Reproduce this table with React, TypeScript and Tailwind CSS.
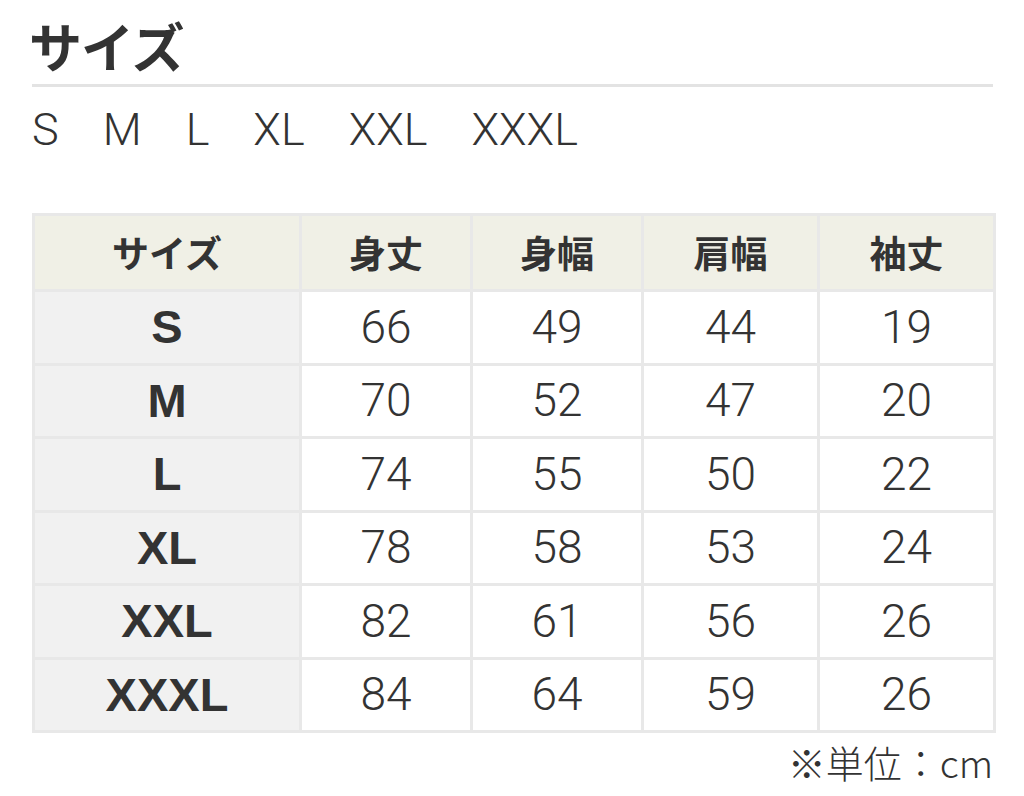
const sizes = ["S", "M", "L", "XL", "XXL", "XXXL"]

const rows = [
  ["S", 66, 49, 44, 19],
  ["M", 70, 52, 47, 20],
  ["L", 74, 55, 50, 22],
  ["XL", 78, 58, 53, 24],
  ["XXL", 82, 61, 56, 26],
  ["XXXL", 84, 64, 59, 26],
]

const heads = ["サイズ", "身丈", "身幅", "肩幅", "袖丈"]

export default function App() {
  return (
    <div className="min-h-screen bg-white text-[#333] px-[32px] pt-[12px] font-['Liberation_Sans','Noto_Sans_CJK_JP',sans-serif]">
      {/* Title */}
      <h1 className="text-[53px] leading-[66px] font-bold font-['Noto_Sans_CJK_JP',sans-serif] tracking-[-1px] -ml-[3px]">
        サイズ
      </h1>
      <div className="h-[3px] w-[961px] bg-[#e3e3e3] mt-[6px]" />

      {/* Size list */}
      <div className="flex gap-[44px] mt-[18px] text-[45px] leading-[50px] font-['Roboto',sans-serif] font-light">
        {sizes.map((s) => (
          <span key={s}>{s}</span>
        ))}
      </div>

      {/* Table */}
      <table className="mt-[58px] w-[961px] table-fixed border-collapse">
        <colgroup>
          <col className="w-[267px]" />
          <col className="w-[171px]" />
          <col className="w-[171px]" />
          <col className="w-[176px]" />
          <col className="w-[176px]" />
        </colgroup>
        <thead>
          <tr className="h-[76px] bg-[#f0f0e6]">
            {heads.map((h) => (
              <th
                key={h}
                className="border-[3px] border-[#e8e8e8] text-[37px] font-bold font-['Noto_Sans_CJK_JP',sans-serif]"
              >
                {h}
              </th>
            ))}
          </tr>
        </thead>
        <tbody>
          {rows.map((r) => (
            <tr key={r[0]} className="h-[73.5px]">
              <th className="border-[3px] border-[#e8e8e8] bg-[#f1f1f1] text-[47px] font-bold">
                {r[0]}
              </th>
              {r.slice(1).map((v, i) => (
                <td
                  key={i}
                  className="border-[3px] border-[#e8e8e8] text-center text-[46px] font-light font-['Roboto',sans-serif]"
                >
                  {v}
                </td>
              ))}
            </tr>
          ))}
        </tbody>
      </table>

      {/* Unit note */}
      <div className="w-[961px] text-right mt-[4px] text-[38px] leading-[50px] font-['Noto_Sans_CJK_JP',sans-serif] font-light">
        ※単位：cm
      </div>
    </div>
  )
}
